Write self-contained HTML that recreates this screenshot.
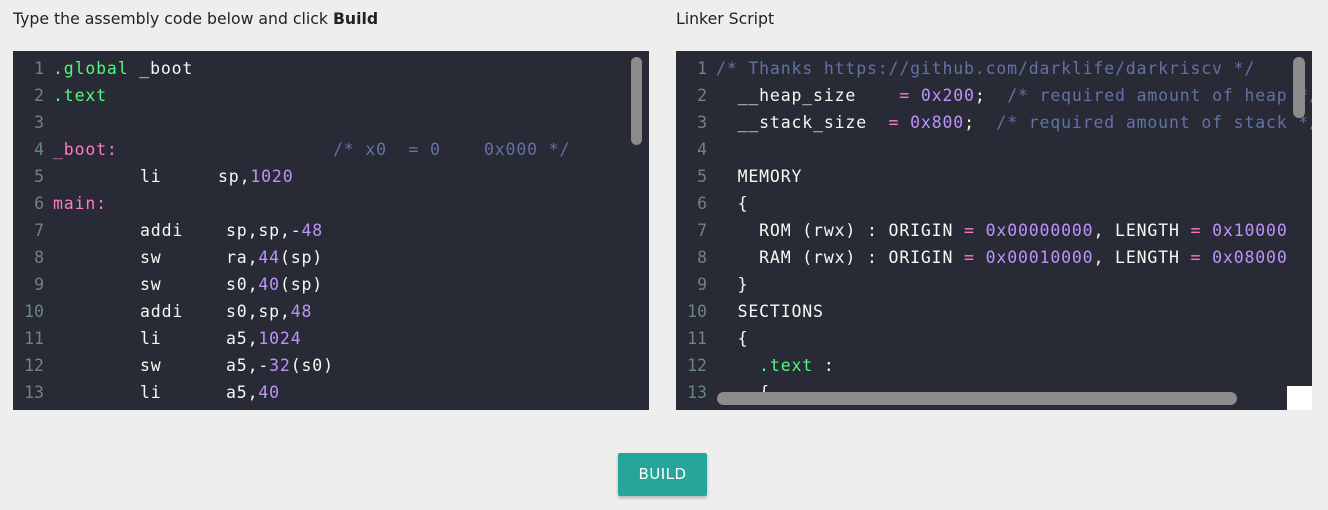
<!DOCTYPE html>
<html><head><style>
body{margin:0;width:1328px;height:510px;background:#eeeeee;position:relative;overflow:hidden;font-family:"DejaVu Sans","Liberation Sans",sans-serif;}
.h{position:absolute;top:9px;font-size:15.7px;color:#222;}
.ed{position:absolute;top:51px;width:636px;height:359px;background:#282a36;overflow:hidden;}
.l{position:absolute;left:0;height:27px;line-height:27px;font-family:"DejaVu Sans Mono",monospace;font-size:16.5px;letter-spacing:0.85px;color:#f8f8f2;white-space:pre;}
.n{position:absolute;text-align:right;color:#6b8586;letter-spacing:0;}
.g{color:#50fa7b}.p{color:#ff79c6}.v{color:#bd93f9}.c{color:#6272a4}
.btn{position:absolute;left:618px;top:453px;width:89px;height:43px;background:#26a69a;color:#fff;border-radius:2px;font-size:15px;text-align:center;line-height:43px;letter-spacing:.5px;box-shadow:0 2px 3px rgba(0,0,0,.25);}
</style></head><body>
<div class="h" style="left:13px">Type the assembly code below and click <b>Build</b></div>
<div class="h" style="left:676px">Linker Script</div>

<div class="ed" style="left:13px">
<div id="L"></div>
<div style="position:absolute;left:618px;top:6px;width:11px;height:88px;background:#8c8c8c;border-radius:6px"></div>
</div>

<div class="ed r" style="left:676px">
<div id="R"></div>
<div style="position:absolute;left:617px;top:6px;width:12px;height:61px;background:#8c8c8c;border-radius:6px"></div>
<div style="position:absolute;left:41px;top:341px;width:520px;height:13px;background:#8c8c8c;border-radius:7px"></div>
<div style="position:absolute;left:611px;top:335px;width:25px;height:24px;background:#fff"></div>
</div>

<div class="btn">BUILD</div>
<script>
function mk(id,lines,numR,codeL){
 var h='';
 lines.forEach(function(s,i){
  var t=4+i*27;
  h+='<div class="l" style="top:'+t+'px;left:0;width:'+numR+'px"><span class="n" style="right:0">'+(i+1)+'</span></div>';
  h+='<div class="l" style="top:'+t+'px;left:'+codeL+'px">'+s+'</div>';
 });
 document.getElementById(id).innerHTML=h;
}
function at(x,s){return '<span style="position:absolute;left:'+x+'px">'+s+'</span>';}
var L=[
'<span class="g">.global</span> _boot',
'<span class="g">.text</span>',
'',
'<span class="p">_boot:</span>'+at(280,'<span class="c">/* x0  = 0    0x000 */</span>'),
at(87,'li')+at(165,'sp,<span class="v">1020</span>'),
'<span class="p">main:</span>',
at(87,'addi')+at(173,'sp,sp,-<span class="v">48</span>'),
at(87,'sw')+at(173,'ra,<span class="v">44</span>(sp)'),
at(87,'sw')+at(173,'s0,<span class="v">40</span>(sp)'),
at(87,'addi')+at(173,'s0,sp,<span class="v">48</span>'),
at(87,'li')+at(173,'a5,<span class="v">1024</span>'),
at(87,'sw')+at(173,'a5,-<span class="v">32</span>(s0)'),
at(87,'li')+at(173,'a5,<span class="v">40</span>')
];
mk('L',L,31,40);
var R=[
'<span class="c">/* Thanks https://github.com/darklife/darkriscv */</span>',
'  __heap_size    <span class="p">=</span> <span class="v">0x200</span>;  <span class="c">/* required amount of heap */</span>',
'  __stack_size  <span class="p">=</span> <span class="v">0x800</span>;  <span class="c">/* required amount of stack */</span>',
'',
'  MEMORY',
'  {',
'    ROM (rwx) : ORIGIN <span class="p">=</span> <span class="v">0x00000000</span>, LENGTH <span class="p">=</span> <span class="v">0x10000</span>',
'    RAM (rwx) : ORIGIN <span class="p">=</span> <span class="v">0x00010000</span>, LENGTH <span class="p">=</span> <span class="v">0x08000</span>',
'  }',
'  SECTIONS',
'  {',
'    <span class="g">.text</span> :',
'    {'
];
mk('R',R,31,40);
</script>
</body></html>
